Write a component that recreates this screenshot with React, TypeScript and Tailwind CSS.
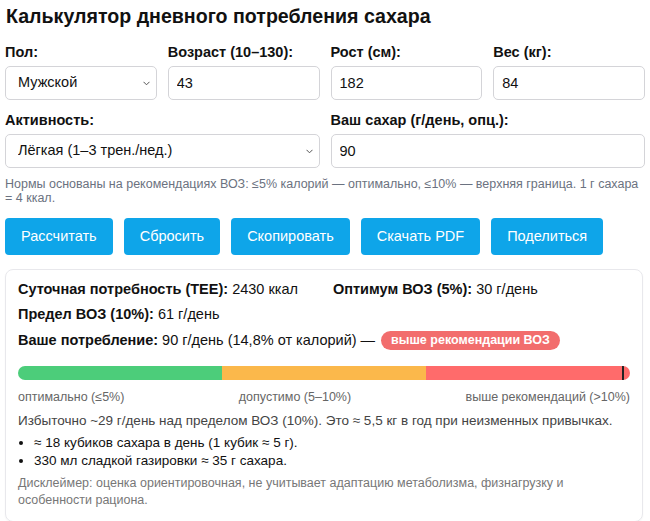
import { useState } from "react";

const font = { fontFamily: '"Liberation Sans", Arial, sans-serif' };

function Field({ label, children, className = "" }: { label: string; children: React.ReactNode; className?: string }) {
  return (
    <label className={`flex flex-col gap-[4px] ${className}`}>
      <span className="text-[14.5px] font-bold leading-[20px] text-[#111]">{label}</span>
      {children}
    </label>
  );
}

const inputCls =
  "h-[34px] w-full rounded-[5px] border border-[#d4d4d8] bg-white px-[8px] text-[14.5px] text-[#111] outline-none";

function Select({ value, onChange, options }: { value: string; onChange: (v: string) => void; options: [string, string][] }) {
  return (
    <div className="relative">
      <select value={value} onChange={(e) => onChange(e.target.value)} className={`${inputCls} appearance-none pl-[12px]`}>
        {options.map(([v, t]) => (
          <option key={v} value={v}>
            {t}
          </option>
        ))}
      </select>
      <svg
        className="pointer-events-none absolute right-[7px] top-[15px]"
        width="7"
        height="5"
        viewBox="0 0 7 5"
        fill="none"
        stroke="#555"
        strokeWidth="1"
      >
        <path d="M0.5 0.8 L3.5 3.8 L6.5 0.8" />
      </svg>
    </div>
  );
}

export default function App() {
  const [sex, setSex] = useState("m");
  const [age, setAge] = useState("43");
  const [height, setHeight] = useState("182");
  const [weight, setWeight] = useState("84");
  const [activity, setActivity] = useState("light");
  const [sugar, setSugar] = useState("90");

  const marker = (14.8 / 15) * 100;

  return (
    <div style={font} className="min-h-screen bg-white px-[5px] pt-[2px] text-[#111]">
      <h1 className="ml-[1px] text-[19.6px] font-bold leading-[28px]">Калькулятор дневного потребления сахара</h1>

      <div className="mt-[12px] grid grid-cols-4 gap-x-[11px] gap-y-[10px]">
        <Field label="Пол:">
          <Select
            value={sex}
            onChange={setSex}
            options={[
              ["m", "Мужской"],
              ["f", "Женский"],
            ]}
          />
        </Field>
        <Field label="Возраст (10–130):">
          <input value={age} onChange={(e) => setAge(e.target.value)} className={inputCls} />
        </Field>
        <Field label="Рост (см):">
          <input value={height} onChange={(e) => setHeight(e.target.value)} className={inputCls} />
        </Field>
        <Field label="Вес (кг):">
          <input value={weight} onChange={(e) => setWeight(e.target.value)} className={inputCls} />
        </Field>
        <Field label="Активность:" className="col-span-2">
          <Select
            value={activity}
            onChange={setActivity}
            options={[
              ["light", "Лёгкая (1–3 трен./нед.)"],
              ["none", "Минимальная"],
            ]}
          />
        </Field>
        <Field label="Ваш сахар (г/день, опц.):" className="col-span-2">
          <input value={sugar} onChange={(e) => setSugar(e.target.value)} className={inputCls} />
        </Field>
      </div>

      <p className="mt-[9px] text-[12.5px] leading-[14px] text-[#6b7280]">
        Нормы основаны на рекомендациях ВОЗ: ≤5% калорий — оптимально, ≤10% — верхняя граница. 1 г сахара = 4 ккал.
      </p>

      <div className="mt-[13px] flex gap-[11px]">
        {["Рассчитать", "Сбросить", "Скопировать", "Скачать PDF", "Поделиться"].map((b) => (
          <button key={b} className="h-[37px] rounded-[4px] bg-[#0ea5e9] px-[16px] text-[14.5px] text-white">
            {b}
          </button>
        ))}
      </div>

      <div className="mr-[2px] mt-[14px] rounded-[8px] border border-[#e8e8ec] px-[12px] pb-[12px] pt-[9px] shadow-[0_1px_2px_rgba(0,0,0,0.04)]">
        <div className="flex flex-wrap gap-x-[35px] gap-y-[5px] text-[14.5px] leading-[20px]">
          <div>
            <b>Суточная потребность (TEE):</b> 2430 ккал
          </div>
          <div>
            <b>Оптимум ВОЗ (5%):</b> 30 г/день
          </div>
          <div>
            <b>Предел ВОЗ (10%):</b> 61 г/день
          </div>
        </div>
        <div className="mt-[6px] flex items-center text-[14.5px] leading-[20px]">
          <span>
            <b>Ваше потребление:</b> 90 г/день (14,8% от калорий) —
          </span>
          <span className="ml-[6px] rounded-full bg-[#f26d6d] px-[10px] text-[12.5px] font-bold leading-[19px] text-white">
            выше рекомендации ВОЗ
          </span>
        </div>

        <div className="relative mt-[16px] flex h-[14px] overflow-hidden rounded-full">
          <div className="flex-1 bg-[#4ccd7a]" />
          <div className="flex-1 bg-[#fbb84b]" />
          <div className="flex-1 bg-[#ff6b6b]" />
          <div className="absolute top-0 h-full w-[2px] bg-[#222]" style={{ left: `${marker}%` }} />
        </div>
        <div className="mt-[9px] flex justify-between text-[12.5px] leading-[16px] text-[#666]">
          <span>оптимально (≤5%)</span>
          <span>допустимо (5–10%)</span>
          <span>выше рекомендаций (&gt;10%)</span>
        </div>

        <p className="mt-[7px] text-[13.5px] leading-[18px] text-[#444]">
          Избыточно ~29 г/день над пределом ВОЗ (10%). Это ≈ 5,5 кг в год при неизменных привычках.
        </p>
        <ul className="mt-[4px] list-disc pl-[16px] text-[13.5px] leading-[18px] text-[#111]">
          <li>≈ 18 кубиков сахара в день (1 кубик ≈ 5 г).</li>
          <li>330 мл сладкой газировки ≈ 35 г сахара.</li>
        </ul>
        <p className="mt-[5px] text-[12.5px] leading-[17px] text-[#777]">
          Дисклеймер: оценка ориентировочная, не учитывает адаптацию метаболизма, физнагрузку и особенности рациона.
        </p>
      </div>
    </div>
  );
}
